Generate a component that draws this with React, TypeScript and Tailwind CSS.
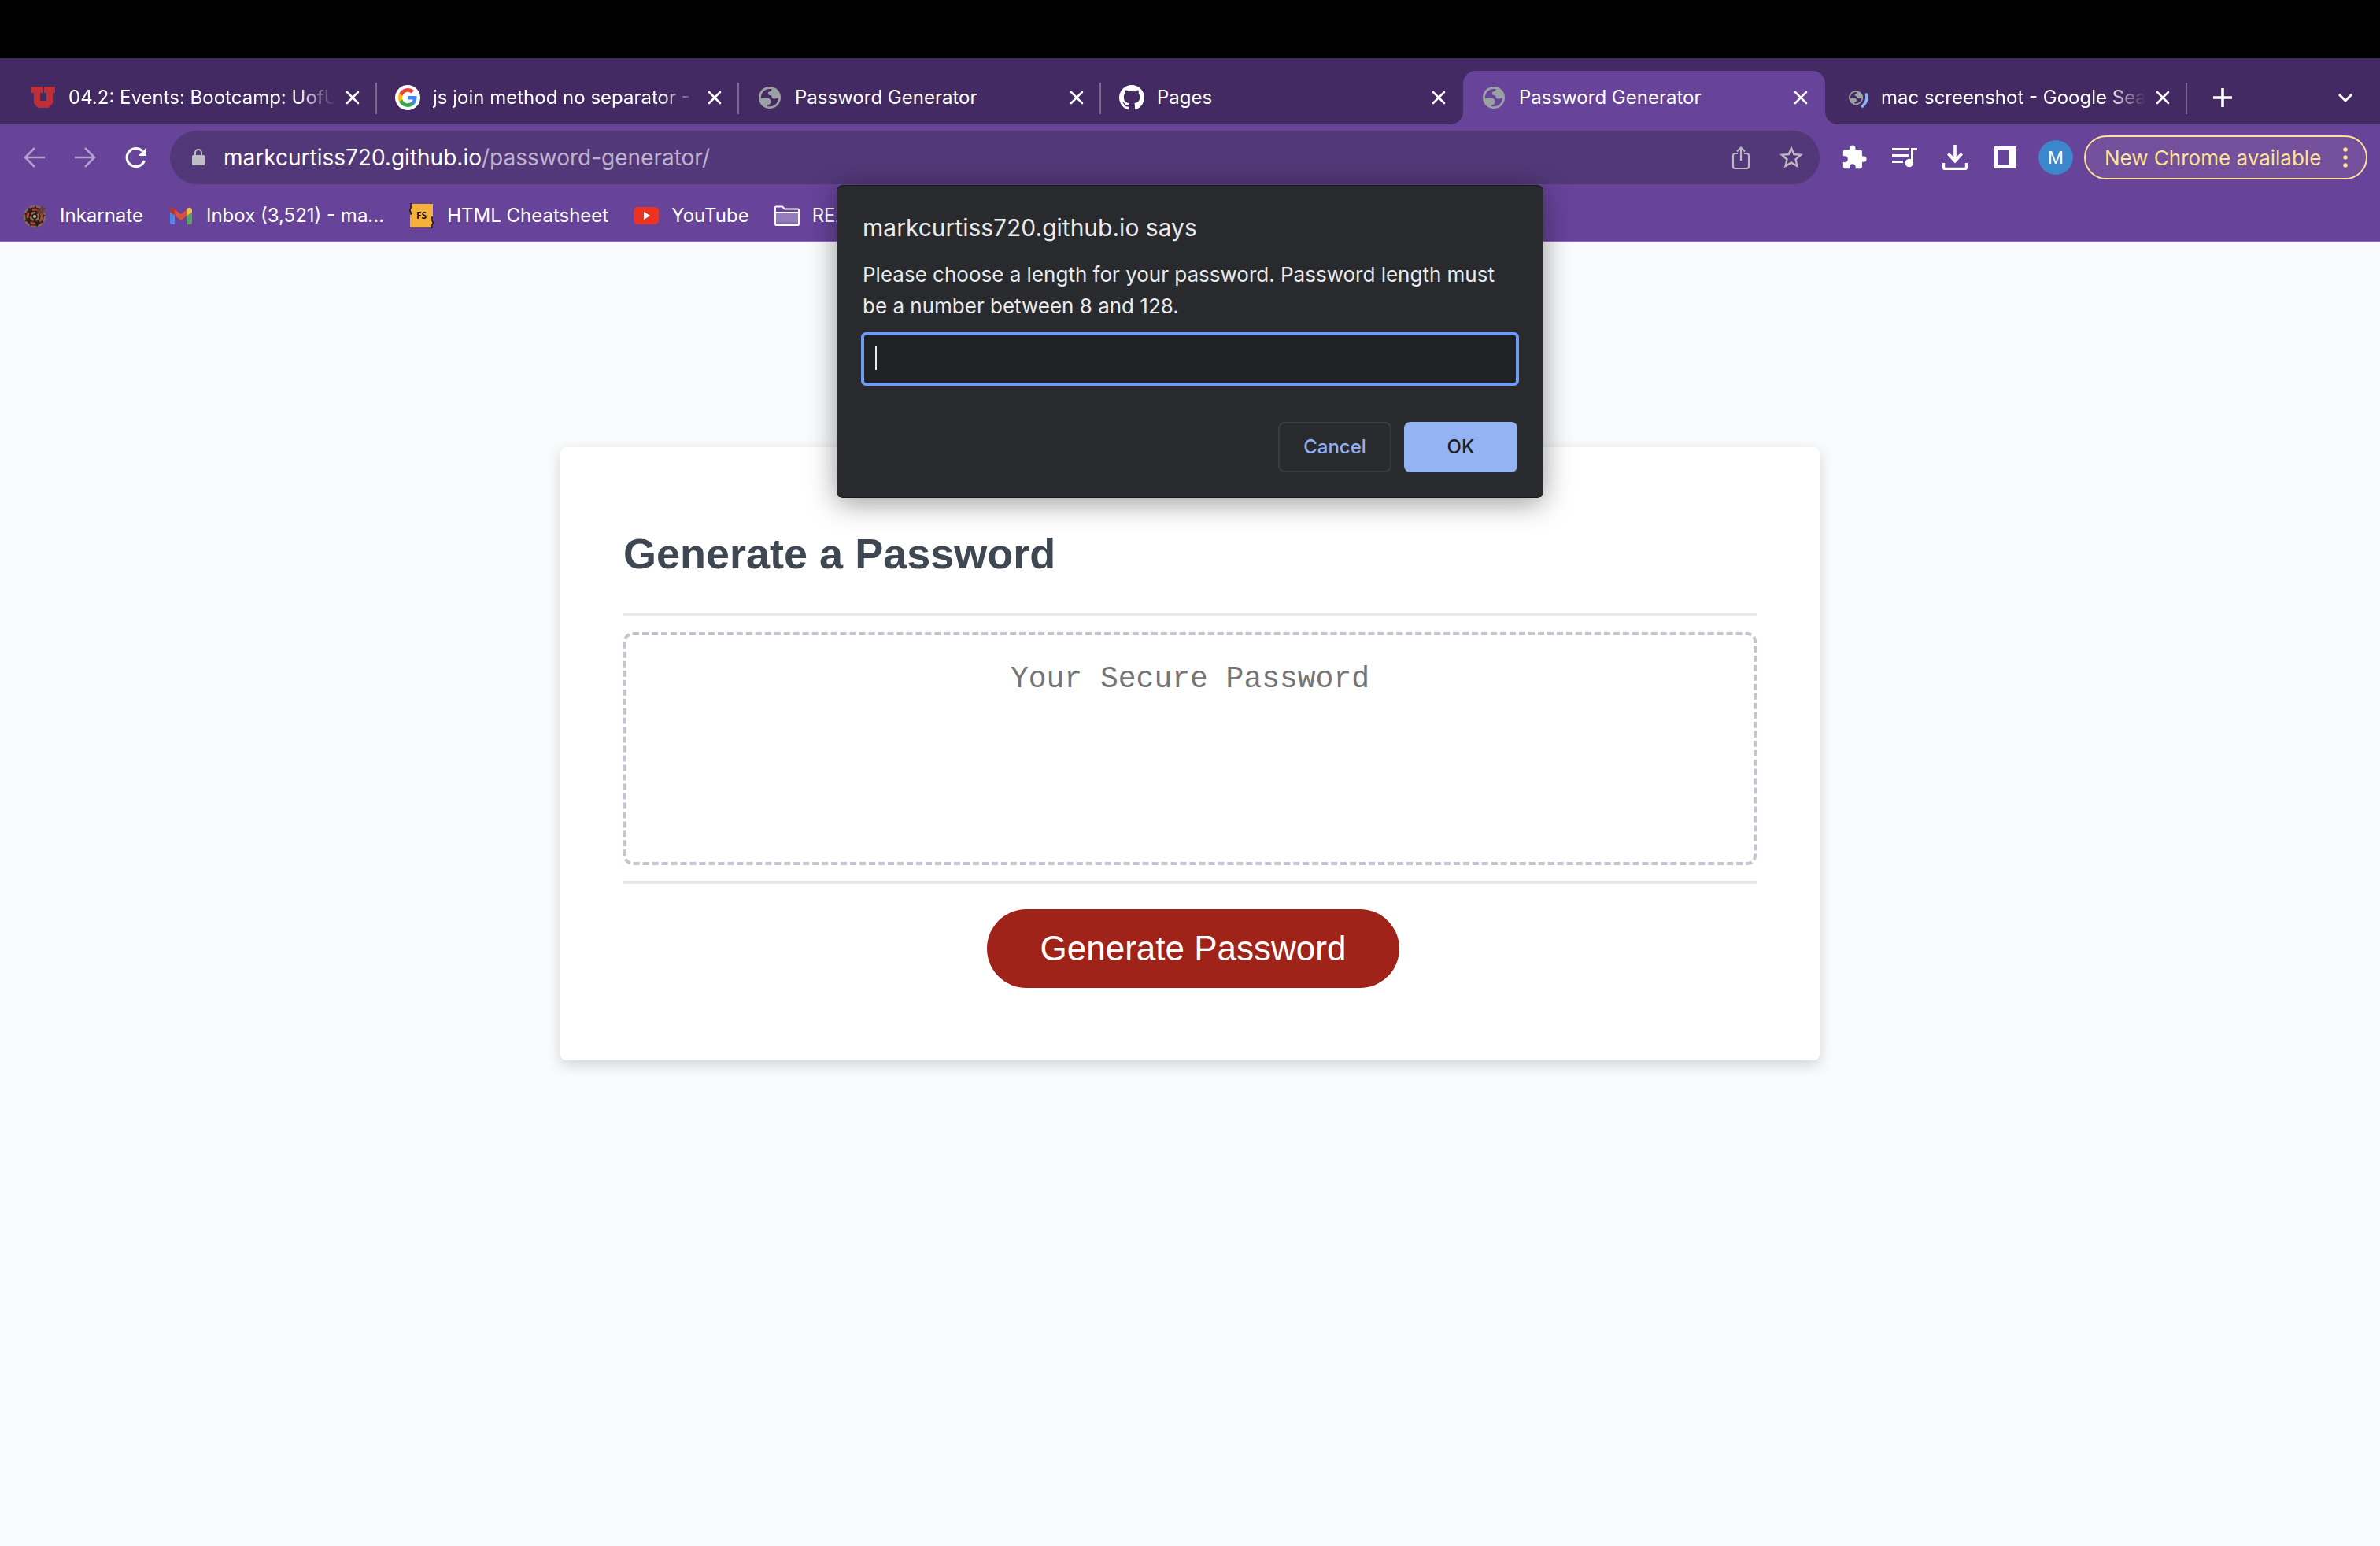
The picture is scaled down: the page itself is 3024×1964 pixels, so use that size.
import React from "react";

const Svg = ({ size, box, className, children }: { size: number; box: string; className?: string; children: React.ReactNode }) => (
  <svg width={size} height={size} viewBox={box} className={`shrink-0 ${className ?? ""}`} aria-hidden="true">
    {children}
  </svg>
);

const UtahIcon = () => (
  <Svg size={32} box="0 0 32 32">
    <path fill="#be2f37" d="M1 2h14v8h-3v10h8V10h-3V2h14v8h-3v13l-5 6H9l-5-6V10H1z" />
  </Svg>
);

const GoogleIcon = () => (
  <Svg size={32} box="0 0 32 32">
    <circle cx="16" cy="16" r="16" fill="#fff" />
    <g transform="translate(4 4)">
      <path fill="#4285f4" d="M23.500 12.300c0-.9-.1-1.600-.2-2.300H12v4.500h6.500c-.3 1.500-1.100 2.700-2.400 3.600v3h3.900c2.200-2.100 3.500-5.200 3.500-8.800z" />
      <path fill="#34a853" d="M12 24c3.200 0 6-1.100 8-2.900l-3.900-3c-1.100.7-2.500 1.200-4.100 1.200-3.100 0-5.800-2.100-6.700-5H1.300v3.100C3.300 21.300 7.300 24 12 24z" />
      <path fill="#fbbc05" d="M5.300 14.300c-.5-1.500-.5-3.100 0-4.600V6.600h-4c-1.700 3.400-1.700 7.400 0 10.800z" />
      <path fill="#ea4335" d="M12 4.800c1.800 0 3.300.6 4.600 1.800L20 3.200C17.900 1.200 15.200 0 12 0 7.300 0 3.300 2.700 1.300 6.600l4 3.100c.9-2.800 3.600-4.900 6.700-4.900z" />
    </g>
  </Svg>
);

const GlobeShape = () => (
  <>
    <circle cx="14" cy="14" r="14" fill="#9aa0a4" />
    <path
      className="fill-[var(--tab)]"
      d="M3 12.500C4 7 8 3.200 13.500 3h3c.3 2-1 3-3 3.300-1.500.3-2.200 1.700-1.800 3 .3 1.200 1.500 1.700 3.300 2 1.200.2 1.500 1.200 1.700 2.200.4 1.700 1.800 2.300 3.800 2 1.600-.2 3-.7 4.500-1.200-.2 6-4.500 10.700-10.500 11H11c0-1.500.3-2.300 1.500-2.500 2-.4 3-1.400 3-3.300 0-3.500-2-5-5.500-5-2.500 0-4.500 0-7 .5z"
    />
  </>
);

const GlobeIcon = () => (
  <Svg size={28} box="0 0 28 28">
    <GlobeShape />
  </Svg>
);

const LoadingGlobeIcon = () => (
  <Svg size={32} box="0 0 32 32">
    <g transform="translate(7 7) scale(0.65)">
      <GlobeShape />
    </g>
    <path d="M29.500 12c1.500 5.500 0 10-5 15" fill="none" stroke="#8ab4f8" strokeWidth="3.600" strokeLinecap="round" />
  </Svg>
);

const GithubIcon = () => (
  <Svg size={32} box="0 0 16 16">
    <path
      fill="#fff"
      d="M8 0C3.580 0 0 3.580 0 8c0 3.540 2.290 6.530 5.470 7.590.4.070.55-.17.55-.38 0-.19-.01-.82-.01-1.490-2.010.37-2.530-.49-2.690-.94-.09-.23-.48-.94-.82-1.130-.28-.15-.68-.52-.01-.53.63-.01 1.080.58 1.230.82.72 1.210 1.870.87 2.330.66.07-.52.28-.87.51-1.070-1.780-.2-3.640-.89-3.640-3.950 0-.87.31-1.590.82-2.150-.08-.2-.36-1.020.08-2.120 0 0 .67-.21 2.200.82.64-.18 1.320-.27 2-.27s1.360.09 2 .27c1.530-1.040 2.200-.82 2.200-.82.44 1.100.16 1.920.08 2.120.51.56.82 1.270.82 2.150 0 3.070-1.870 3.750-3.650 3.950.29.25.54.73.54 1.480 0 1.070-.01 1.930-.01 2.200 0 .21.15.46.55.38A8.010 8.010 0 0 0 16 8c0-4.420-3.580-8-8-8z"
    />
  </Svg>
);

const CloseIcon = () => (
  <Svg size={20} box="0 0 20 20">
    <path d="M3 3l14 14M17 3L3 17" stroke="#fff" strokeWidth="2.600" strokeLinecap="round" />
  </Svg>
);

type TabData = { title: string; icon: React.ReactNode; active?: boolean; line?: boolean; fade?: boolean };

const tabs: TabData[] = [
  { title: "04.2: Events: Bootcamp: UofU-VIRT", icon: <UtahIcon />, line: true, fade: true },
  { title: "js join method no separator - Google", icon: <GoogleIcon />, line: true, fade: true },
  { title: "Password Generator", icon: <GlobeIcon />, line: true },
  { title: "Pages", icon: <GithubIcon /> },
  { title: "Password Generator", icon: <GlobeIcon />, active: true },
  { title: "mac screenshot - Google Search", icon: <LoadingGlobeIcon />, line: true, fade: true },
];

const Flare = ({ className, d }: { className: string; d: string }) => (
  <svg width="16" height="16" viewBox="0 0 16 16" className={`absolute bottom-0 ${className}`} aria-hidden="true">
    <path d={d} fill="#67439a" />
  </svg>
);

const Tab = ({ title, icon, active, line, fade }: TabData) => (
  <div
    role="tab"
    aria-selected={!!active}
    className={`relative flex h-[68px] w-[460px] min-w-0 items-center pl-[23px] pr-[21px] first:pl-5 ${
      active ? "rounded-t-2xl bg-[#67439a] [--tab:#67439a]" : "[--tab:#432a62]"
    }`}
  >
    {active && <Flare className="-left-4" d="M16 0v16H0A16 16 0 0 0 16 0z" />}
    {active && <Flare className="-right-4" d="M0 0v16h16A16 16 0 0 1 0 0z" />}
    <span className="flex w-8 shrink-0 justify-center">{icon}</span>
    <span
      className={`ml-4 flex-1 overflow-hidden whitespace-nowrap text-2xl text-white ${
        fade ? "mr-3 [mask-image:linear-gradient(to_right,black_86%,transparent)]" : "mr-4"
      }`}
    >
      {title}
    </span>
    <button aria-label={`Close ${title}`} className="shrink-0">
      <CloseIcon />
    </button>
    {line && <span className="absolute right-0 top-[15px] h-10 w-0.5 bg-[#7c6a91]" />}
  </div>
);

const Bookmark = ({ icon, children }: { icon: React.ReactNode; children: string }) => (
  <a href="#" className="flex shrink-0 items-center gap-4 whitespace-nowrap">
    {icon}
    {children}
  </a>
);

const ToolButton = ({ label, children }: { label: string; children: React.ReactNode }) => (
  <button aria-label={label} className="flex size-8 shrink-0 items-center justify-center">
    {children}
  </button>
);

const Toolbar = () => (
  <div className="flex h-[84px] items-center pl-7 pr-4">
    <div className="flex gap-8 text-[#b49fcd]">
      <ToolButton label="Back">
        <Svg size={32} box="0 0 32 32">
          <path d="M29 16H4M16 4L4 16l12 12" fill="none" stroke="currentColor" strokeWidth="2.600" />
        </Svg>
      </ToolButton>
      <ToolButton label="Forward">
        <Svg size={32} box="0 0 32 32">
          <path d="M3 16h25M16 4l12 12-12 12" fill="none" stroke="currentColor" strokeWidth="2.600" />
        </Svg>
      </ToolButton>
      <ToolButton label="Reload">
        <Svg size={32} box="0 0 32 32">
          <path d="M27.500 20A11.500 11.500 0 1 1 25 8" fill="none" stroke="#fff" strokeWidth="3.200" />
          <path d="M30 3.500V14H19.500z" fill="#fff" />
        </Svg>
      </ToolButton>
    </div>
    <div className="ml-7 flex h-[68px] min-w-0 flex-1 items-center rounded-full bg-[#523878] pl-[25px] pr-5">
      <Svg size={22} box="0 0 16 22">
        <path fill="#bdbec4" d="M1.500 8h13A1.500 1.500 0 0 1 16 9.500v10a1.500 1.500 0 0 1-1.500 1.500h-13A1.500 1.500 0 0 1 0 19.500v-10A1.500 1.500 0 0 1 1.500 8z" />
        <path d="M4 9V5a4 4 0 0 1 8 0v4" fill="none" stroke="#bdbec4" strokeWidth="2" />
      </Svg>
      <div className="ml-[21px] flex-1 text-[28px] leading-9 text-white">
        markcurtiss720.github.io<span className="text-[#bfb2cf]">/password-generator/</span>
      </div>
      <div className="flex gap-8">
        <ToolButton label="Share">
          <Svg size={32} box="0 0 32 32" className="text-[#bdb7c4]">
            <path
              d="M12 11H8.500A2.500 2.500 0 0 0 6 13.500v14A2.500 2.500 0 0 0 8.500 30h15a2.500 2.500 0 0 0 2.500-2.500v-14a2.500 2.500 0 0 0-2.500-2.500H20M16 20V4M11 8.500l5-5 5 5"
              fill="none"
              stroke="currentColor"
              strokeWidth="2.200"
            />
          </Svg>
        </ToolButton>
        <ToolButton label="Bookmark this page">
          <Svg size={36} box="0 0 24 24">
            <path
              fill="#bdb7c4"
              d="M22 9.240l-7.190-.62L12 2 9.190 8.630 2 9.240l5.460 4.730L5.820 21 12 17.270 18.180 21l-1.630-7.030L22 9.240zM12 15.400l-3.760 2.270 1-4.280-3.320-2.880 4.380-.38L12 6.100l1.710 4.040 4.380.38-3.320 2.880 1 4.280L12 15.400z"
            />
          </Svg>
        </ToolButton>
      </div>
    </div>
    <div className="ml-7 flex gap-8">
      <ToolButton label="Extensions">
        <Svg size={34} box="0 0 24 24">
          <path
            fill="#fff"
            d="M20.500 11H19V7a2 2 0 0 0-2-2h-4V3.500a2.500 2.500 0 0 0-5 0V5H4a2 2 0 0 0-1.990 2v3.800H3.500a2.700 2.700 0 0 1 0 5.400H2V20a2 2 0 0 0 2 2h3.800v-1.500a2.700 2.700 0 0 1 5.400 0V22H17a2 2 0 0 0 2-2v-4h1.500a2.500 2.500 0 0 0 0-5z"
          />
        </Svg>
      </ToolButton>
      <ToolButton label="Media controls">
        <Svg size={32} box="0 0 32 32">
          <path d="M0 5.500h21M0 13.500h21M0 21.500h14M25.500 24V5.500H32" fill="none" stroke="#fff" strokeWidth="3" />
          <circle cx="21.800" cy="23" r="5.200" fill="#fff" />
        </Svg>
      </ToolButton>
      <ToolButton label="Downloads">
        <Svg size={32} box="0 0 32 32">
          <path d="M1.500 23v5.500a2 2 0 0 0 2 2h25a2 2 0 0 0 2-2V23" fill="none" stroke="#fff" strokeWidth="3.400" />
          <path d="M16 0v20" stroke="#fff" strokeWidth="3.600" />
          <path d="M6 12.500l2.500-2.500 7.500 7 7.500-7 2.500 2.500-10 11z" fill="#fff" />
        </Svg>
      </ToolButton>
      <ToolButton label="Side panel">
        <Svg size={32} box="0 0 32 32">
          <path fill="#fff" fillRule="evenodd" d="M2 2h28v28H2zM6 6v20h14V6z" />
        </Svg>
      </ToolButton>
    </div>
    <button
      aria-label="Profile"
      className="ml-[26px] flex size-11 shrink-0 items-center justify-center rounded-full bg-[#3c86cb] text-[22px] text-white"
    >
      M
    </button>
    <button className="ml-[14px] flex h-14 w-[360px] shrink-0 items-center justify-between whitespace-nowrap rounded-full border-2 border-[#fde293] bg-[#734f9c] pl-6 pr-3 text-[26px] text-[#fde293]">
      New Chrome available
      <Svg size={28} box="0 0 28 28">
        <circle cx="14" cy="4" r="2.700" fill="currentColor" />
        <circle cx="14" cy="14" r="2.700" fill="currentColor" />
        <circle cx="14" cy="24" r="2.700" fill="currentColor" />
      </Svg>
    </button>
  </div>
);

const Bookmarks = () => (
  <nav className="flex h-[66px] items-center gap-8 overflow-hidden border-b-2 border-[#8c6bb1] pl-7 text-2xl text-white">
    <Bookmark
      icon={
        <Svg size={32} box="0 0 32 32">
          <circle cx="16" cy="17" r="13" fill="#2b1c19" stroke="#8a6650" strokeWidth="2.500" strokeDasharray="7 2" />
          <circle cx="16" cy="17" r="9" fill="none" stroke="#a8452f" strokeWidth="3" strokeDasharray="7 6" />
          <circle cx="16" cy="17" r="5" fill="none" stroke="#8b7058" strokeWidth="2.500" strokeDasharray="6 3" />
          <path d="M18 9l10-6-3 4 6-1-4 4 3 1-8 3z" fill="#6d3a31" />
          <circle cx="16" cy="17" r="2" fill="#c3b07a" />
        </Svg>
      }
    >
      Inkarnate
    </Bookmark>
    <Bookmark
      icon={
        <Svg size={32} box="0 0 32 32">
          <path fill="#4f86ec" d="M2 10l6 4v13H4a2 2 0 0 1-2-2z" />
          <path fill="#58a55c" d="M30 10l-6 4v13h4a2 2 0 0 0 2-2z" />
          <path fill="#d85140" d="M8 8l8 6 8-6v7.500l-8 6.500-8-6.500z" />
          <path fill="#b8332a" d="M2 9.500C2 6 5.500 4.500 8 7v8.500l-6-4z" />
          <path fill="#f1bf42" d="M30 9.500C30 6 26.500 4.500 24 7v8.500l6-4z" />
        </Svg>
      }
    >
      Inbox (3,521) - ma...
    </Bookmark>
    <Bookmark
      icon={
        <Svg size={32} box="0 0 32 32">
          <rect x="1" y="1" width="29" height="30" fill="#f5b13d" />
          <path d="M3 1H2v5q0 2-2 3 2 1 2 3v2h1M28 18h1v4q0 2 2 3-2 1-2 3v3h-1" fill="none" stroke="#1b1208" strokeWidth="1.600" />
          <text x="15.500" y="20" textAnchor="middle" fontSize="12" fontWeight="700" fontFamily="Open Sans, sans-serif" fill="#1b1208">
            FS
          </text>
        </Svg>
      }
    >
      HTML Cheatsheet
    </Bookmark>
    <Bookmark
      icon={
        <Svg size={32} box="0 0 32 32">
          <rect y="5" width="32" height="22" rx="5" fill="#ea3323" />
          <path d="M13 11l8 5-8 5z" fill="#fff" />
        </Svg>
      }
    >
      YouTube
    </Bookmark>
    <Bookmark
      icon={
        <Svg size={32} box="0 0 32 32">
          <path d="M1 12h30v15H1z" fill="#947bba" />
          <path d="M1 25h30" stroke="#836aa8" strokeWidth="2" />
          <path d="M1 27V5.500a1 1 0 0 1 1-1h8l3 3h17a1 1 0 0 1 1 1V27a1 1 0 0 1-1 1H2a1 1 0 0 1-1-1zM1 12h30" fill="none" stroke="#fff" strokeWidth="2" />
        </Svg>
      }
    >
      README
    </Bookmark>
  </nav>
);

const PromptDialog = () => (
  <form
    role="dialog"
    aria-label="markcurtiss720.github.io says"
    className="absolute left-1/2 top-[235px] flex w-[898px] -translate-x-1/2 flex-col rounded-lg border border-[#17181a] bg-[#292a2d] px-[30px] py-8 text-[#e8eaed] shadow-[0_6px_36px_rgba(0,0,0,0.4)]"
  >
    <h2 className="px-0.5 text-[30px] leading-[42px]">markcurtiss720.github.io says</h2>
    <label htmlFor="length" className="mt-[19px] px-0.5 text-[26px] leading-10">
      Please choose a length for your password. Password length must be a number between 8 and 128.
    </label>
    <div className="relative mt-[13px]">
      <input
        id="length"
        type="text"
        className="h-[68px] w-full rounded-md border-4 border-[#6f9bf0] bg-[#202124] px-4 text-[26px] outline-none"
      />
      <span className="absolute left-[18px] top-[18px] h-[30px] w-0.5 bg-[#e8eaed]" />
    </div>
    <div className="mt-[46px] flex justify-end gap-4 px-0.5 text-2xl font-medium">
      <button type="button" className="h-16 w-36 rounded-lg border-2 border-[#3b3c40] text-[#8fb2f6]">
        Cancel
      </button>
      <button type="button" className="h-16 w-36 rounded-lg bg-[#94b3f4] text-[#202124]">
        OK
      </button>
    </div>
  </form>
);

export default function App() {
  return (
    <div className="relative flex min-h-screen flex-col bg-[#fafbfd] font-['Inter',sans-serif]">
      <div className="h-[74px] bg-black" />
      <header className="bg-[#67439a]">
        <div role="tablist" className="flex h-[84px] items-end bg-[#432a62] pl-[19px] pr-8">
          {tabs.map((tab, i) => (
            <Tab key={i} {...tab} />
          ))}
          <div className="flex h-[68px] flex-1 items-center justify-between pl-[33px] pr-[2px]">
            <button aria-label="New tab">
              <Svg size={24} box="0 0 24 24">
                <path d="M12 0v24M0 12h24" stroke="#fff" strokeWidth="3.600" />
              </Svg>
            </button>
            <button aria-label="Search tabs">
              <Svg size={20} box="0 0 20 20">
                <path d="M2 6l8 8 8-8" fill="none" stroke="#fff" strokeWidth="3" />
              </Svg>
            </button>
          </div>
        </div>
        <Toolbar />
        <Bookmarks />
      </header>

      <main className="mx-auto mt-[260px] w-full max-w-[1600px] rounded-lg bg-white px-20 pb-[92px] pt-20 font-['Liberation_Sans',Arial,sans-serif] shadow-[0_6px_18px_rgba(0,0,0,0.16)]">
        <h1 className="pb-7 pt-[21px] text-[54px] font-bold leading-[68px] text-[#3f4852]">Generate a Password</h1>
        <div className="mt-[14px] border-y-4 border-[#e6e8ea] py-5">
          <textarea
            readOnly
            aria-label="Generated password"
            placeholder="Your Secure Password"
            className="block h-[296px] w-full resize-none rounded-xl border-4 border-dashed border-[#c1c7d0] p-8 text-center font-['Liberation_Mono',monospace] text-[38px] leading-[48px] placeholder:text-[#757575]"
          />
        </div>
        <div className="mt-8 flex justify-center pl-2">
          <button className="h-[100px] rounded-full bg-[#a0231a] px-[68px] text-[44px] text-white">Generate Password</button>
        </div>
      </main>

      <PromptDialog />
    </div>
  );
}
